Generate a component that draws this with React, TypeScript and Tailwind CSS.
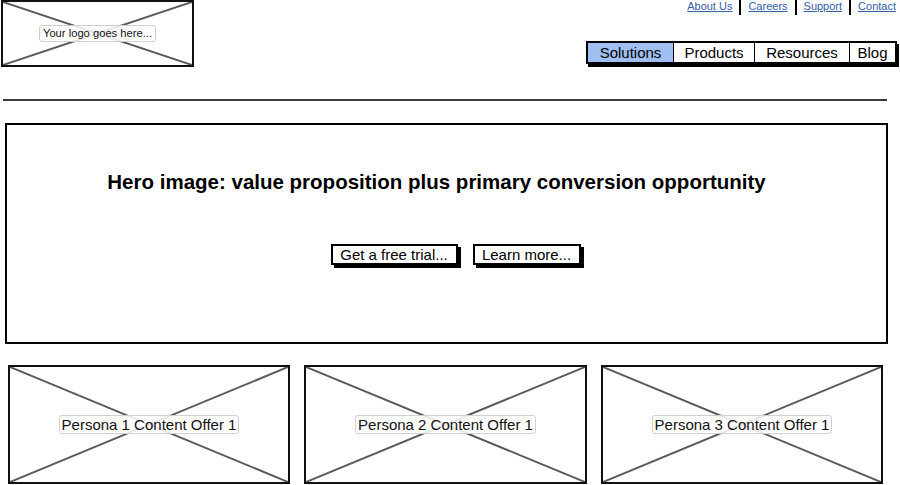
import React from 'react';

const links = ['About Us', 'Careers', 'Support', 'Contact'];

const tabs = [
  { label: 'Solutions', width: 'w-[85px]', active: true },
  { label: 'Products', width: 'w-[81px]', active: false },
  { label: 'Resources', width: 'w-[95px]', active: false },
  { label: 'Blog', width: 'w-[46px]', active: false },
];

// Crossed-box placeholder used for the logo and the persona offers
function Placeholder({ label, className, labelClass }: { label: string; className: string; labelClass: string }) {
  return (
    <div className={`relative border-2 border-[#111] bg-white ${className}`}>
      <svg className="absolute inset-0 h-full w-full" preserveAspectRatio="none" viewBox="0 0 100 100">
        <line x1="0" y1="0" x2="100" y2="100" stroke="#5a5a5a" strokeWidth="2" vectorEffect="non-scaling-stroke" />
        <line x1="100" y1="0" x2="0" y2="100" stroke="#5a5a5a" strokeWidth="2" vectorEffect="non-scaling-stroke" />
      </svg>
      <div className="relative flex h-full items-center justify-center">
        <span className={`rounded-[3px] border border-[#d0d0d0] bg-white/85 leading-none text-[#111] ${labelClass}`}>
          {label}
        </span>
      </div>
    </div>
  );
}

export default function App() {
  return (
    <div className="h-[485px] w-[900px] overflow-hidden bg-white font-['Liberation_Sans',Arial,sans-serif] text-black">
      {/* Header */}
      <div className="flex justify-between">
        <Placeholder
          label="Your logo goes here..."
          className="ml-[1px] h-[67px] w-[193px]"
          labelClass="px-[3px] py-[2px] text-[11.2px]"
        />
        <div className="flex flex-col items-end pr-[3px]">
          <div className="flex items-start pr-[1px] text-[11px]">
            {links.map((link, i) => (
              <div key={link} className="flex items-start">
                {i > 0 && <span className="mx-[7px] h-[15px] w-[2px] bg-black" />}
                <a href="#" className="leading-[13px] text-[#3560a8] underline">
                  {link}
                </a>
              </div>
            ))}
          </div>
          <div className="mt-[26px] flex border-2 border-black shadow-[2px_3px_0_#000]">
            {tabs.map((tab, i) => (
              <div
                key={tab.label}
                className={`flex h-[19px] items-center justify-center text-[15px] leading-none ${tab.width} ${
                  tab.active ? 'bg-[#9fbff2]' : 'bg-white'
                } ${i > 0 ? 'border-l border-black' : ''}`}
              >
                {tab.label}
              </div>
            ))}
          </div>
        </div>
      </div>

      {/* Divider */}
      <div className="ml-[3px] mt-[32px] h-[2px] w-[884px] bg-[#3a3a3a]" />

      {/* Hero */}
      <div className="ml-[5px] mt-[22px] flex h-[221px] w-[883px] flex-col border-2 border-black">
        <div className="mt-[45px] flex justify-center pr-[20px]">
          <h1 className="text-[20.5px] font-bold leading-[24px]">
            Hero image: value proposition plus primary conversion opportunity
          </h1>
        </div>
        <div className="mt-[50px] flex justify-center gap-[15px] pl-[18px]">
          <button className="flex h-[21px] w-[127px] items-center justify-center border-2 border-black bg-white text-[15px] leading-none shadow-[3px_3px_0_#000]">
            Get a free trial...
          </button>
          <button className="flex h-[21px] w-[108px] items-center justify-center border-2 border-black bg-white text-[15px] leading-none shadow-[3px_3px_0_#000]">
            Learn more...
          </button>
        </div>
      </div>

      {/* Persona offers */}
      <div className="mt-[21px] flex gap-[14px] pl-[8px]">
        {[1, 2, 3].map((n) => (
          <Placeholder
            key={n}
            label={`Persona ${n} Content Offer 1`}
            className={`h-[119px] ${n === 2 ? 'w-[283px]' : 'w-[282px]'}`}
            labelClass="px-[2px] py-[1px] text-[15px]"
          />
        ))}
      </div>
    </div>
  );
}
